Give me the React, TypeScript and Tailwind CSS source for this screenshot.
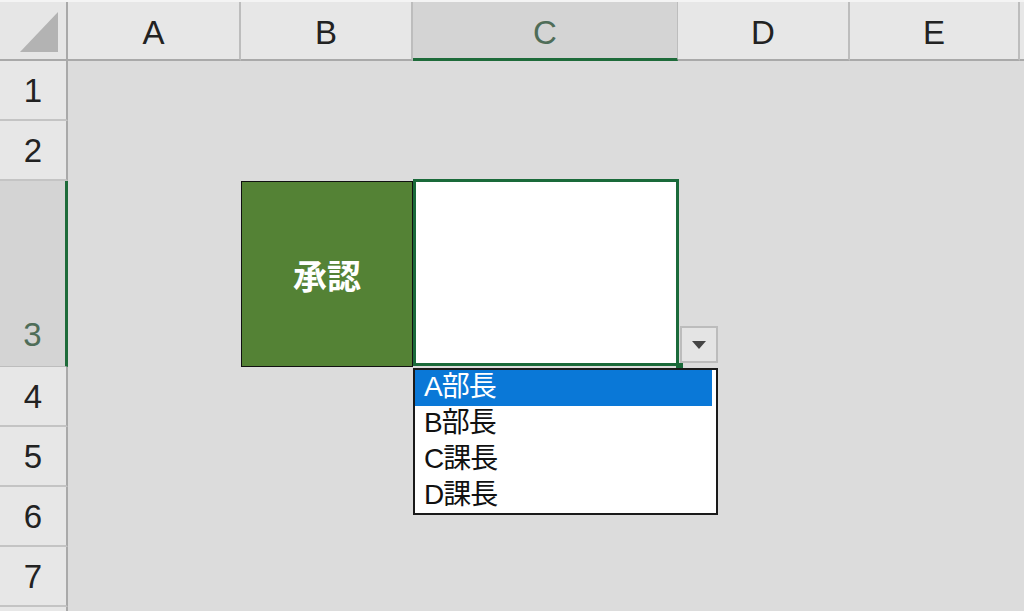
import React from "react";

const cols = [
  { name: "A", w: "w-[173px]" },
  { name: "B", w: "w-[172px]" },
  { name: "C", w: "w-[265px]" },
  { name: "D", w: "w-[172px]" },
  { name: "E", w: "w-[170px]" },
];

const rows = [
  { n: "1", h: "h-[60px]" },
  { n: "2", h: "h-[60px]" },
  { n: "3", h: "h-[186px]" },
  { n: "4", h: "h-[60px]" },
  { n: "5", h: "h-[60px]" },
  { n: "6", h: "h-[60px]" },
  { n: "7", h: "h-[60px]" },
];

const options = ["A部長", "B部長", "C課長", "D課長"];

const font = { fontFamily: '"Liberation Sans", "Noto Sans CJK JP", sans-serif' };

export default function App() {
  return (
    <div className="w-[1024px] h-[611px] overflow-hidden bg-[#dcdcdc] flex flex-col" style={font}>
      {/* column headers */}
      <div className="flex h-[61px] shrink-0 border-t-2 border-[#f4f4f4]">
        <div className="w-[68px] shrink-0 bg-[#e6e6e6] border-r-2 border-b-2 border-[#a9a9a9] relative">
          <svg className="absolute right-[8px] bottom-[7px]" width="38" height="40" viewBox="0 0 38 40">
            <polygon points="38,0 38,40 0,40" fill="#b3b3b3" />
          </svg>
        </div>
        {cols.map((c) =>
          c.name === "C" ? (
            <div key={c.name}
              className={`${c.w} shrink-0 flex items-center justify-center pt-[5px] bg-[#d4d4d4] border-r border-[#bdbdbd] border-b-[3px] border-b-[#1e6b3a] text-[33px] text-[#4f6d58]`}>
              {c.name}
            </div>
          ) : (
            <div key={c.name}
              className={`${c.w} shrink-0 flex items-center justify-center pt-[5px] bg-[#e7e7e7] border-r-2 border-b-2 border-r-[#bdbdbd] border-b-[#a9a9a9] text-[33px] text-[#222]`}>
              {c.name}
            </div>
          )
        )}
        <div className="flex-1 bg-[#e7e7e7] border-b-2 border-[#a9a9a9]" />
      </div>

      <div className="flex flex-1">
        {/* row headers */}
        <div className="w-[68px] shrink-0 flex flex-col">
          {rows.map((r) =>
            r.n === "3" ? (
              <div key={r.n}
                className={`${r.h} shrink-0 flex items-end justify-center pb-[7px] bg-[#d4d4d4] border-r-[3px] border-r-[#1e6b3a] border-b border-b-[#bdbdbd] text-[33px] text-[#4f6d58]`}>
                {r.n}
              </div>
            ) : (
              <div key={r.n}
                className={`${r.h} shrink-0 flex items-center justify-center pt-[2px] bg-[#e7e7e7] border-r-2 border-r-[#a9a9a9] border-b-2 border-b-[#c4c4c4] text-[33px] text-[#222]`}>
                {r.n}
              </div>
            )
          )}
          <div className="flex-1 bg-[#e7e7e7] border-r-2 border-[#a9a9a9]" />
        </div>

        {/* sheet body */}
        <div className="flex-1 flex flex-col">
          <div className="h-[120px] shrink-0" />
          <div className="flex h-[186px] shrink-0 pl-[173px]">
            <div className="w-[172px] shrink-0 bg-[#548235] border border-[#111] flex items-center justify-center text-[34px] font-bold text-white pt-[6px]">
              承認
            </div>
            <div className="w-[266px] shrink-0 relative">
              <div className="absolute inset-x-0 top-[-2px] bottom-[1px] bg-white border-[3px] border-[#1a6a3a]" />
              <div className="absolute right-[-4px] bottom-[-3px] w-[7px] h-[7px] bg-[#1a6a3a]" />
              <div className="absolute left-[calc(100%+1px)] bottom-[4px] w-[38px] h-[37px] bg-[#e4e4e4] border-2 border-[#bcbcbc] flex items-center justify-center">
                <svg width="14" height="8" viewBox="0 0 14 8">
                  <polygon points="0,0 14,0 7,8" fill="#444" />
                </svg>
              </div>
              <div className="absolute left-0 top-[calc(100%+1px)] w-[305px] h-[147px] bg-white border-2 border-[#1a1a1a] pr-[4px] flex flex-col z-10">
                {options.map((o, i) => (
                  <div key={o}
                    className={`h-[36px] shrink-0 flex items-center pl-[9px] pb-[3px] text-[28px] leading-none tracking-[-1px] ${i === 0 ? "bg-[#0a78d7] text-white" : "text-[#111]"}`}>
                    {o}
                  </div>
                ))}
              </div>
            </div>
          </div>
        </div>
      </div>
    </div>
  );
}
